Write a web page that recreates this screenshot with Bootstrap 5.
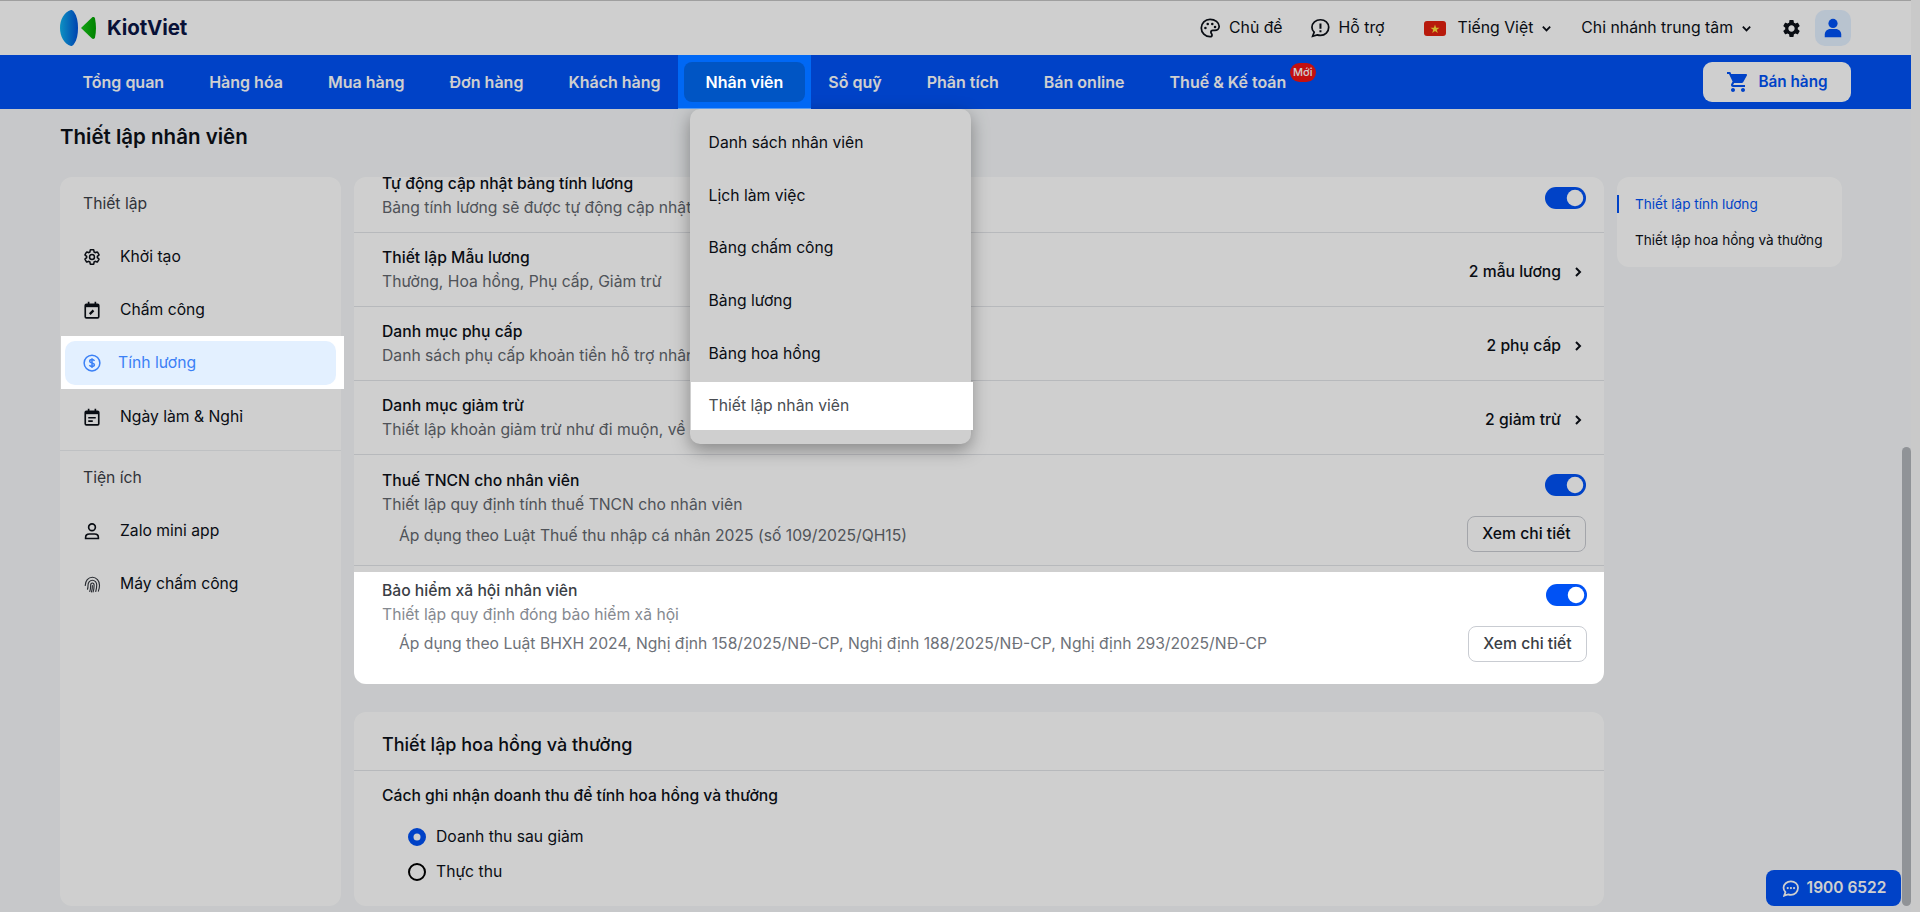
<!DOCTYPE html>
<html lang="vi">
<head>
  <meta charset="UTF-8">
  <title>Thiết lập nhân viên</title>
  <meta name="viewport" content="width=device-width, initial-scale=1">
  <link href="https://cdn.jsdelivr.net/npm/bootstrap@5.3.3/dist/css/bootstrap.min.css" rel="stylesheet">
  <style>
    html, body { height: 100%; overflow: hidden; }
    body { font-family: Inter, "Noto Sans", sans-serif; font-size: 15.7px; color: #0c1018; background: #f8f8f8; }
    svg { display: block; flex: none; }

    /* dim layer of the product tour, raised items sit above it */
    .tour-dim { position: fixed; inset: 0; z-index: 10; background: rgba(0,0,0,.19); }
    .tour-up { position: relative; z-index: 20; }

    .kv-page { width: 1911px; height: 912px; background: #f5f7f9; }

    .kv-top { height: 55px; background: #fff; border-top: 1px solid #c4c4c4; padding: 0 60px; font-size: 15.8px; }
    .kv-brand { font-size: 20.5px; font-weight: 700; color: #0b1546; letter-spacing: -.1px; margin-left: 11px; }
    .kv-gap1 { margin-left: 26px; }
    .kv-gap2 { margin-left: 39px; }
    .kv-gap3 { margin-left: 29px; }
    .kv-gap4 { margin-left: 13px; }
    .kv-avatar { width: 36px; height: 36px; border-radius: 10px; background: #e3f0ff; }

    .kv-nav { height: 54px; background: #0052f5; padding: 0 60px; }
    .kv-nav .nav-link { color: #fff; font-size: 16px; font-weight: 600; padding: 0 22.5px; height: 54px; display: flex; align-items: center; }
    .kv-nav .nav-item { position: relative; }
    .kv-nav .kv-tab { margin: 0 -5.5px; padding: 7px 6px 6px; background: #0068f5; border-bottom: 1px solid #5a9bf0; }
    .kv-tab span { display: flex; align-items: center; height: 40px; padding: 0 22px; background: #0055c4; border-radius: 8px; }
    .kv-new { position: absolute; top: 8px; right: -7px; width: 26px; height: 19px; border-radius: 10px; background: #f01414; color: #fff; font-size: 11px; font-weight: 500; line-height: 19px; text-align: center; }
    .kv-sell { width: 148px; height: 40px; border-radius: 9px; background: #fff; color: #0052f5; font-size: 15.3px; font-weight: 600; border: 0; }

    .kv-menu { top: 100%; left: 6.5px; width: 281px; margin: 0; padding: 10px 1px 14px; border: 0; border-radius: 10px; background: #fff; z-index: auto; box-shadow: 0 6px 18px rgba(0,0,0,.35); font-size: 15.7px; }
    .kv-menu .dropdown-item { height: 48px; margin-bottom: 4.6px; padding: 0 18px; display: flex; align-items: center; color: #0c1018; }
    .kv-menu .dropdown-item.tour-up { width: 282px; margin-bottom: 0; background: #fff; color: #484c52; }

    .kv-title { font-size: 20.5px; font-weight: 600; line-height: 24px; padding: 16px 60px 28px; margin: 0; }
    .kv-body { padding-left: 60px; gap: 13px; }

    .kv-side { width: 281px; height: 729px; background: #fff; border-radius: 12px; }
    .kv-side-label { height: 53px; padding: 0 23px; display: flex; align-items: center; color: #3c4048; }
    .kv-side-link { height: 53px; padding: 0 23px; gap: 19px; display: flex; align-items: center; color: #0c1018; }
    .kv-side-low { padding-top: 2px; }
    .kv-side-on { width: 283px; height: 53px; margin-left: 1px; padding: 5px 8px 4px 4px; background: #fff; }
    .kv-side-on div { height: 44px; border-radius: 10px; background: #e3f0ff; color: #3b80f6; padding: 0 18px; gap: 17px; display: flex; align-items: center; }
    .kv-side-line { margin: 8px 0 0; border-top: 1px solid #eceef1; height: 1px; }

    .kv-main { width: 1250px; }
    .kv-box { background: #fff; border-radius: 12px; }
    .kv-clip { height: 507px; overflow: hidden; }
    .kv-rows { margin-top: -18px; }
    .kv-row { height: 74px; padding: 13px 18px 0 28px; border-bottom: 1px solid #e2e4e8; }
    .kv-row-tall { height: 111px; padding-top: 14px; }
    .kv-row-on { width: 1251px; height: 112px; padding: 7px 18px 0 28px; margin-top: 6px; background: #fff; }
    .kv-row-tall .kv-sw, .kv-row-on .kv-sw { margin: 5px 0 -5px; }
    .kv-name { font-weight: 500; line-height: 24px; }
    .kv-desc { color: #62666d; line-height: 24px; }
    .kv-row-tall .kv-desc, .kv-row-on .kv-desc { line-height: 23px; }
    .kv-note { color: #62666d; padding: 3px 0 0 17px; }
    .kv-row-on .kv-note { padding-top: 0; }
    .kv-val { font-weight: 500; gap: 11px; margin-right: 2px; }
    .kv-more { height: 36px; width: 119px; padding: 0; border: 1px solid #c9ccd2; border-radius: 8px; font-size: 15.7px; font-weight: 500; color: #0c1018; background: transparent; }
    .kv-row-on .kv-name, .kv-row-on .kv-more { color: #3a3e45; }
    .kv-row-on .kv-desc { color: #858990; }
    .kv-row-on .kv-note { color: #6d7178; }
    .kv-row-on .form-check-input { background-color: #3072f6; }

    .form-switch .kv-tg { width: 41px; height: 22px; margin: 0; border: 0; background-color: #0052f5; float: none; --bs-form-switch-bg: url("data:image/svg+xml,%3csvg xmlns='http://www.w3.org/2000/svg' viewBox='-4 -4 8 8'%3e%3ccircle r='3.2' fill='%23fff'/%3e%3c/svg%3e"); }
    .kv-sw { padding: 0; margin: 0; min-height: 0; }
    .kv-sw-first { margin-top: 15px; }

    .kv-box2 { height: 194px; margin-top: 28px; }
    .kv-box2-head { height: 59px; padding: 23px 28px 0; font-size: 18px; font-weight: 500; line-height: 20px; border-bottom: 1px solid #e2e4e8; }
    .kv-box2-sub { padding: 14px 28px 0; margin-bottom: 12px; font-weight: 500; line-height: 22px; }
    .kv-radio { padding: 0 0 0 54px; margin: 0; height: 35px; min-height: 0; gap: 10px; }
    .kv-radio .form-check-input { width: 18px; height: 18px; margin: 0; float: none; border: 2px solid #000; opacity: 1; }
    .kv-radio .form-check-input:checked { background-color: #0052f5; border-color: #0052f5; }
    .kv-radio .form-check-label { opacity: 1; }

    .kv-right { width: 225px; height: 90px; padding: 9px 0; background: #fff; border-radius: 12px; font-size: 13.6px; }
    .kv-right-item { height: 36px; display: flex; align-items: center; color: #0c1018; }
    .kv-right-item span { padding-left: 18px; line-height: 18px; }
    .kv-right-item.kv-cur { color: #0052f5; }
    .kv-right-item.kv-cur span { border-left: 2px solid #0052f5; padding-left: 16px; }

    .kv-thumb { position: fixed; left: 1902px; top: 447px; width: 9px; height: 459px; border-radius: 5px; background: #b2b5bb; }
    .kv-hotline { position: fixed; left: 1766px; top: 870px; width: 135px; height: 36px; border-radius: 8px; background: #0052f5; color: #fff; font-size: 15.5px; font-weight: 600; gap: 7px; }
  </style>
</head>
<body>

<div class="kv-page">

  <div class="kv-top d-flex align-items-center">
    <svg width="36" height="36" viewBox="0 0 36 36">
      <defs>
        <linearGradient id="lg1" x1="0" x2="1" y1="0" y2="0"><stop offset="0" stop-color="#11b4f0"/><stop offset="1" stop-color="#0052d8"/></linearGradient>
        <linearGradient id="lg2" x1="0" x2="1" y1="0" y2="0"><stop offset="0" stop-color="#18c818"/><stop offset="1" stop-color="#00a000"/></linearGradient>
      </defs>
      <path d="M11 0C4 2 0 10 0 18s4 16 11 18c1 0 2-.5 3-2 3-4 4-10 4-16s-1-12-4-16c-1-1.500-2-2-3-2z" fill="url(#lg1)"/>
      <path d="M21 18 32 7.500c1-.8 2.500-.5 3 1 1.300 6 1.300 13 0 19-.5 1.500-2 1.800-3 1L21 18z" fill="url(#lg2)"/>
    </svg>
    <span class="kv-brand">KiotViet</span>

    <div class="ms-auto d-flex align-items-center gap-2">
      <svg width="22" height="22" viewBox="0 0 24 24" fill="none" stroke="#0c1018" stroke-width="1.900"><path d="M12 2.500a9.500 9.500 0 0 0 0 19c1.300 0 2.200-.9 2.200-2 0-.5-.2-1-.6-1.400-.4-.4-.6-.9-.6-1.400 0-1.100.9-2 2-2h2.300c2.600 0 4.700-2 4.700-4.500 0-4.300-4.500-7.700-10-7.700z"/><g fill="#0c1018" stroke="none"><circle cx="7" cy="12" r="1.400"/><circle cx="9.500" cy="7.700" r="1.400"/><circle cx="14.500" cy="7.700" r="1.400"/><circle cx="17.500" cy="11" r="1.400"/></g></svg>
      <span>Chủ đề</span>
    </div>
    <div class="kv-gap1 d-flex align-items-center gap-2">
      <svg width="22" height="22" viewBox="0 0 24 24" fill="none" stroke="#0c1018" stroke-width="1.900"><path d="M12.500 3c-5 0-9.300 3.600-9.300 8.200 0 2.100.9 4 2.400 5.400L4 21l5-1.500c1.100.4 2.300.6 3.500.6 5 0 9-3.900 9-8.900S17.500 3 12.500 3z"/><path d="M12.500 7.200v5.500M12.500 14.500v2" stroke-width="2.200"/></svg>
      <span>Hỗ trợ</span>
    </div>
    <div class="kv-gap2 d-flex align-items-center gap-2">
      <svg width="22" height="15" viewBox="0 0 22 15"><rect width="22" height="15" rx="3" fill="#e3200f"/><polygon points="11,3.500 12.100,6.700 15.500,6.700 12.800,8.700 13.800,12 11,10 8.200,12 9.200,8.700 6.500,6.700 9.900,6.700" fill="#ffe23a"/></svg>
      <span class="ms-1">Tiếng Việt</span>
      <svg width="11" height="11" viewBox="0 0 12 12" fill="none" stroke="#0c1018" stroke-width="2"><path d="M2 4l4 4 4-4"/></svg>
    </div>
    <div class="kv-gap3 d-flex align-items-center gap-2">
      <span>Chi nhánh trung tâm</span>
      <svg width="11" height="11" viewBox="0 0 12 12" fill="none" stroke="#0c1018" stroke-width="2"><path d="M2 4l4 4 4-4"/></svg>
    </div>
    <svg class="kv-gap3" width="21" height="21" viewBox="0 0 24 24" fill="#0c1018"><path d="M19.140 12.940c.04-.3.06-.61.06-.94 0-.32-.02-.64-.07-.94l2.030-1.580a.49.49 0 0 0 .12-.61l-1.920-3.320a.488.488 0 0 0-.59-.22l-2.390.96c-.5-.38-1.030-.7-1.620-.94l-.36-2.540a.484.484 0 0 0-.48-.41h-3.840c-.24 0-.43.17-.47.41l-.36 2.540c-.59.24-1.130.57-1.620.94l-2.390-.96c-.22-.08-.47 0-.59.22L2.740 8.870c-.12.21-.08.47.12.61l2.030 1.580c-.05.3-.09.63-.09.94s.02.64.07.94l-2.030 1.580a.49.49 0 0 0-.12.61l1.920 3.320c.12.22.37.29.59.22l2.390-.96c.5.38 1.030.7 1.620.94l.36 2.540c.05.24.24.41.48.41h3.840c.24 0 .44-.17.47-.41l.36-2.540c.59-.24 1.130-.56 1.620-.94l2.390.96c.22.08.47 0 .59-.22l1.920-3.320c.12-.22.07-.47-.12-.61l-2.010-1.580zM12 15.600c-1.980 0-3.600-1.620-3.600-3.600s1.620-3.600 3.600-3.600 3.600 1.620 3.600 3.600-1.620 3.600-3.600 3.600z"/></svg>
    <div class="kv-avatar kv-gap4 d-flex align-items-center justify-content-center">
      <svg width="22" height="22" viewBox="0 0 24 24" fill="#0052f5"><circle cx="12" cy="7" r="5"/><path d="M3 22v-3c0-3.300 2.700-6 6-6h6c3.300 0 6 2.700 6 6v3z"/></svg>
    </div>
  </div>

  <div class="kv-nav d-flex align-items-center">
    <ul class="nav flex-nowrap">
      <li class="nav-item"><a class="nav-link" href="#">Tổng quan</a></li>
      <li class="nav-item"><a class="nav-link" href="#">Hàng hóa</a></li>
      <li class="nav-item"><a class="nav-link" href="#">Mua hàng</a></li>
      <li class="nav-item"><a class="nav-link" href="#">Đơn hàng</a></li>
      <li class="nav-item"><a class="nav-link" href="#">Khách hàng</a></li>
      <li class="nav-item">
        <a class="nav-link kv-tab tour-up" href="#"><span>Nhân viên</span></a>
        <div class="dropdown-menu show kv-menu">
          <a class="dropdown-item" href="#">Danh sách nhân viên</a>
          <a class="dropdown-item" href="#">Lịch làm việc</a>
          <a class="dropdown-item" href="#">Bảng chấm công</a>
          <a class="dropdown-item" href="#">Bảng lương</a>
          <a class="dropdown-item" href="#">Bảng hoa hồng</a>
          <a class="dropdown-item tour-up" href="#">Thiết lập nhân viên</a>
        </div>
      </li>
      <li class="nav-item"><a class="nav-link" href="#">Sổ quỹ</a></li>
      <li class="nav-item"><a class="nav-link" href="#">Phân tích</a></li>
      <li class="nav-item"><a class="nav-link" href="#">Bán online</a></li>
      <li class="nav-item"><a class="nav-link" href="#">Thuế &amp; Kế toán</a><span class="kv-new">Mới</span></li>
    </ul>
    <button class="kv-sell btn ms-auto d-flex align-items-center justify-content-center gap-2" type="button">
      <svg width="24" height="24" viewBox="0 0 24 24" fill="#0052f5"><path d="M7 18c-1.100 0-1.990.9-1.990 2S5.900 22 7 22s2-.9 2-2-.9-2-2-2zM1 2v2h2l3.600 7.590-1.350 2.450c-.16.28-.25.61-.25.96 0 1.100.9 2 2 2h12v-2H7.420c-.14 0-.25-.11-.25-.25l.03-.12.9-1.630h7.450c.75 0 1.410-.41 1.750-1.030l3.580-6.490c.08-.14.12-.31.12-.48 0-.55-.45-1-1-1H5.210l-.94-2H1zm16 16c-1.100 0-1.990.9-1.990 2s.89 2 1.990 2 2-.9 2-2-.9-2-2-2z"/></svg>
      Bán hàng
    </button>
  </div>

  <h1 class="kv-title">Thiết lập nhân viên</h1>

  <div class="kv-body d-flex align-items-start">

    <div class="kv-side">
      <div class="kv-side-label">Thiết lập</div>
      <a class="kv-side-link text-decoration-none" href="#">
        <svg width="18" height="18" viewBox="0 0 24 24" fill="none" stroke="#0c1018" stroke-width="2"><path d="M19.140 12.940c.04-.3.06-.61.06-.94 0-.32-.02-.64-.07-.94l2.030-1.580a.49.49 0 0 0 .12-.61l-1.920-3.320a.488.488 0 0 0-.59-.22l-2.390.96c-.5-.38-1.030-.7-1.620-.94l-.36-2.540a.484.484 0 0 0-.48-.41h-3.840c-.24 0-.43.17-.47.41l-.36 2.540c-.59.24-1.130.57-1.620.94l-2.390-.96c-.22-.08-.47 0-.59.22L2.740 8.870c-.12.21-.08.47.12.61l2.030 1.580c-.05.3-.09.63-.09.94s.02.64.07.94l-2.030 1.580a.49.49 0 0 0-.12.61l1.920 3.320c.12.22.37.29.59.22l2.390-.96c.5.38 1.030.7 1.620.94l.36 2.540c.05.24.24.41.48.41h3.840c.24 0 .44-.17.47-.41l.36-2.540c.59-.24 1.130-.56 1.620-.94l2.390.96c.22.08.47 0 .59-.22l1.920-3.320c.12-.22.07-.47-.12-.61l-2.010-1.580z"/><circle cx="12" cy="12" r="3.300"/></svg>
        <span>Khởi tạo</span>
      </a>
      <a class="kv-side-link text-decoration-none" href="#">
        <svg width="18" height="18" viewBox="0 0 24 24" fill="none" stroke="#0c1018" stroke-width="2.200"><rect x="3" y="4.500" width="18" height="18" rx="1.500"/><path d="M7.500 1v5M16.500 1v5" /><path d="M3 6.500h18" stroke-width="3.500"/><path d="M9 17.500l5-5" stroke-width="3"/></svg>
        <span>Chấm công</span>
      </a>
      <div class="kv-side-on tour-up">
        <div>
          <svg width="18" height="18" viewBox="0 0 24 24" fill="none" stroke="#3b80f6" stroke-width="2"><circle cx="12" cy="12" r="10.500"/><path d="M15.200 9.200c-.4-1.100-1.700-1.800-3.200-1.800-1.800 0-3.100.9-3.100 2.300 0 3.100 6.300 1.600 6.300 4.700 0 1.400-1.400 2.300-3.200 2.300-1.600 0-2.900-.7-3.300-1.900M12 5.500v13" /></svg>
          <span>Tính lương</span>
        </div>
      </div>
      <a class="kv-side-link kv-side-low text-decoration-none" href="#">
        <svg width="18" height="18" viewBox="0 0 24 24" fill="none" stroke="#0c1018" stroke-width="2.200"><rect x="3" y="4.500" width="18" height="18" rx="1.500"/><path d="M7.500 1v5M16.500 1v5"/><path d="M3 6.500h18" stroke-width="3.500"/><path d="M7 13h10M7 17.500h6"/></svg>
        <span>Ngày làm &amp; Nghỉ</span>
      </a>
      <div class="kv-side-line"></div>
      <div class="kv-side-label">Tiện ích</div>
      <a class="kv-side-link text-decoration-none" href="#">
        <svg width="18" height="18" viewBox="0 0 24 24" fill="none" stroke="#0c1018" stroke-width="2.200"><circle cx="12" cy="7" r="4.500"/><path d="M3.500 22v-1.500c0-3 2.500-4.500 5-4.500h7c2.500 0 5 1.500 5 4.500V22z"/></svg>
        <span>Zalo mini app</span>
      </a>
      <a class="kv-side-link text-decoration-none" href="#">
        <svg width="18" height="18" viewBox="0 0 24 24" fill="none" stroke="#33373e" stroke-width="1.500" stroke-linecap="round"><path d="M3 14c0-6 4-11 9.500-11S22 8 22 13.500c0 3-.5 5.500-1.500 8"/><path d="M6 19c.7-2 .7-3.500.7-5.500 0-3.500 2.600-6.500 5.800-6.500s5.800 2.800 5.800 6c0 3-.4 6-1.300 9"/><path d="M9 22c1-2.500 1.200-5 1.200-8.500 0-1.500 1-2.800 2.300-2.800s2.300 1.200 2.300 2.800c0 3.500-.4 6-1.300 9"/><path d="M12.500 14c0 3-.4 6-1.200 8.500"/></svg>
        <span>Máy chấm công</span>
      </a>
    </div>

    <div class="kv-main">
      <div class="kv-box kv-clip">
        <div class="kv-rows">
          <div class="kv-row d-flex justify-content-between align-items-start">
            <div>
              <div class="kv-name">Tự động cập nhật bảng tính lương</div>
              <div class="kv-desc">Bảng tính lương sẽ được tự động cập nhật khi có thay đổi dữ liệu</div>
            </div>
            <div class="form-check form-switch kv-sw kv-sw-first"><input class="form-check-input kv-tg" type="checkbox" role="switch" checked></div>
          </div>
          <div class="kv-row d-flex justify-content-between">
            <div>
              <div class="kv-name">Thiết lập Mẫu lương</div>
              <div class="kv-desc">Thưởng, Hoa hồng, Phụ cấp, Giảm trừ</div>
            </div>
            <div class="kv-val d-flex align-items-center pb-2">2 mẫu lương
              <svg width="12" height="12" viewBox="0 0 12 12" fill="none" stroke="#0c1018" stroke-width="2"><path d="M4 2l4 4-4 4"/></svg>
            </div>
          </div>
          <div class="kv-row d-flex justify-content-between">
            <div>
              <div class="kv-name">Danh mục phụ cấp</div>
              <div class="kv-desc">Danh sách phụ cấp khoản tiền hỗ trợ nhân viên theo từng vị trí công việc.</div>
            </div>
            <div class="kv-val d-flex align-items-center pb-2">2 phụ cấp
              <svg width="12" height="12" viewBox="0 0 12 12" fill="none" stroke="#0c1018" stroke-width="2"><path d="M4 2l4 4-4 4"/></svg>
            </div>
          </div>
          <div class="kv-row d-flex justify-content-between">
            <div>
              <div class="kv-name">Danh mục giảm trừ</div>
              <div class="kv-desc">Thiết lập khoản giảm trừ như đi muộn, về sớm, vi phạm nội quy</div>
            </div>
            <div class="kv-val d-flex align-items-center pb-2">2 giảm trừ
              <svg width="12" height="12" viewBox="0 0 12 12" fill="none" stroke="#0c1018" stroke-width="2"><path d="M4 2l4 4-4 4"/></svg>
            </div>
          </div>
          <div class="kv-row kv-row-tall">
            <div class="d-flex justify-content-between align-items-start">
              <div class="kv-name">Thuế TNCN cho nhân viên</div>
              <div class="form-check form-switch kv-sw"><input class="form-check-input kv-tg" type="checkbox" role="switch" checked></div>
            </div>
            <div class="kv-desc">Thiết lập quy định tính thuế TNCN cho nhân viên</div>
            <div class="d-flex justify-content-between align-items-center">
              <div class="kv-note">Áp dụng theo Luật Thuế thu nhập cá nhân 2025 (số 109/2025/QH15)</div>
              <button class="btn kv-more" type="button">Xem chi tiết</button>
            </div>
          </div>
          <div class="kv-row-on tour-up">
            <div class="d-flex justify-content-between align-items-start">
              <div class="kv-name">Bảo hiểm xã hội nhân viên</div>
              <div class="form-check form-switch kv-sw"><input class="form-check-input kv-tg" type="checkbox" role="switch" checked></div>
            </div>
            <div class="kv-desc">Thiết lập quy định đóng bảo hiểm xã hội</div>
            <div class="d-flex justify-content-between align-items-center">
              <div class="kv-note">Áp dụng theo Luật BHXH 2024, Nghị định 158/2025/NĐ-CP, Nghị định 188/2025/NĐ-CP, Nghị định 293/2025/NĐ-CP</div>
              <button class="btn kv-more" type="button">Xem chi tiết</button>
            </div>
          </div>
        </div>
      </div>

      <div class="kv-box kv-box2">
        <div class="kv-box2-head">Thiết lập hoa hồng và thưởng</div>
        <div class="kv-box2-sub">Cách ghi nhận doanh thu để tính hoa hồng và thưởng</div>
        <div class="form-check kv-radio d-flex align-items-center">
          <input class="form-check-input" type="radio" name="dt" id="dt1" checked>
          <label class="form-check-label" for="dt1">Doanh thu sau giảm</label>
        </div>
        <div class="form-check kv-radio d-flex align-items-center">
          <input class="form-check-input" type="radio" name="dt" id="dt2">
          <label class="form-check-label" for="dt2">Thực thu</label>
        </div>
      </div>
    </div>

    <div class="kv-right">
      <div class="kv-right-item kv-cur"><span>Thiết lập tính lương</span></div>
      <div class="kv-right-item"><span>Thiết lập hoa hồng và thưởng</span></div>
    </div>
  </div>
</div>

<div class="kv-thumb"></div>
<div class="kv-hotline d-flex align-items-center justify-content-center">
  <svg width="19" height="19" viewBox="0 0 24 24" fill="none" stroke="#fff" stroke-width="2.200"><path d="M12.500 3c-5 0-9.300 3.600-9.300 8.200 0 2.100.9 4 2.400 5.400L4 21l5-1.500c1.100.4 2.300.6 3.500.6 5 0 9-3.900 9-8.900S17.500 3 12.500 3z"/><g fill="#fff" stroke="none"><circle cx="8.500" cy="11.500" r="1.400"/><circle cx="12.500" cy="11.500" r="1.400"/><circle cx="16.500" cy="11.500" r="1.400"/></g></svg>
  <span>1900 6522</span>
</div>

<div class="tour-dim"></div>

<script src="https://cdn.jsdelivr.net/npm/bootstrap@5.3.3/dist/js/bootstrap.bundle.min.js"></script>
</body>
</html>
